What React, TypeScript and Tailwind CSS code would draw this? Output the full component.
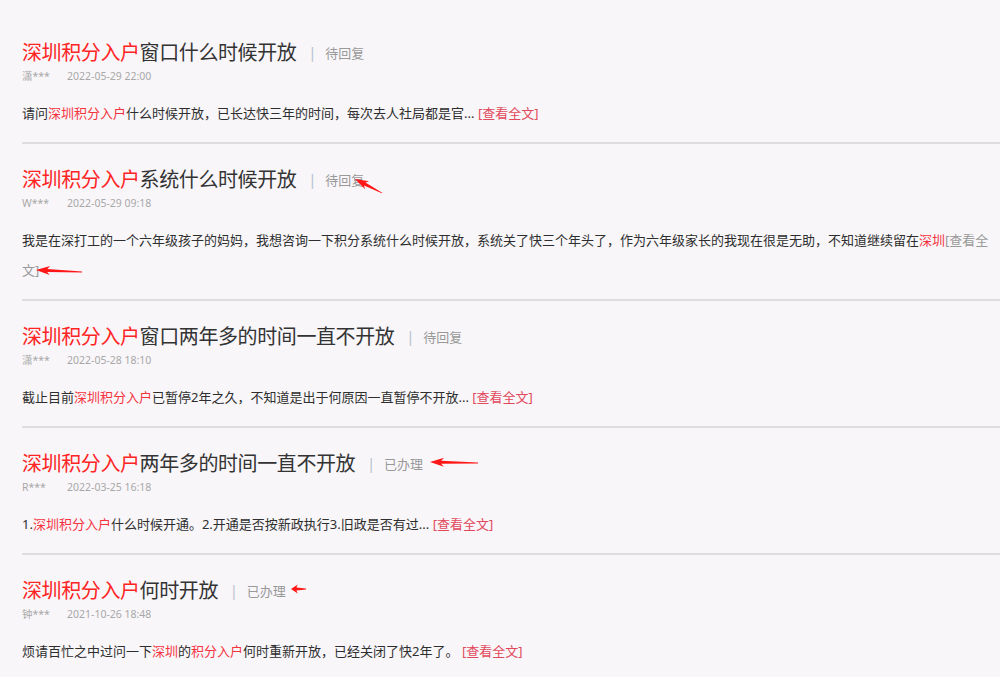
import React from "react";

interface Item {
  rest: string;
  status: string;
  user: string;
  time: string;
  body: React.ReactNode;
}

const Hl = ({ children }: { children: React.ReactNode }) => (
  <span className="text-[#f5333f]">{children}</span>
);

const More = ({ gray }: { gray?: boolean }) => (
  <span className={gray ? "text-[#999]" : "text-[#e2485c]"}>[查看全文]</span>
);

const items: Item[] = [
  {
    rest: "窗口什么时候开放",
    status: "待回复",
    user: "潇***",
    time: "2022-05-29 22:00",
    body: (
      <>
        请问<Hl>深圳积分入户</Hl>什么时候开放，已长达快三年的时间，每次去人社局都是官... <More />
      </>
    ),
  },
  {
    rest: "系统什么时候开放",
    status: "待回复",
    user: "W***",
    time: "2022-05-29 09:18",
    body: (
      <>
        我是在深打工的一个六年级孩子的妈妈，我想咨询一下积分系统什么时候开放，系统关了快三个年头了，作为六年级家长的我现在很是无助，不知道继续留在
        <Hl>深圳</Hl>
        <More gray />
      </>
    ),
  },
  {
    rest: "窗口两年多的时间一直不开放",
    status: "待回复",
    user: "潇***",
    time: "2022-05-28 18:10",
    body: (
      <>
        截止目前<Hl>深圳积分入户</Hl>已暂停2年之久，不知道是出于何原因一直暂停不开放... <More />
      </>
    ),
  },
  {
    rest: "两年多的时间一直不开放",
    status: "已办理",
    user: "R***",
    time: "2022-03-25 16:18",
    body: (
      <>
        1.<Hl>深圳积分入户</Hl>什么时候开通。2.开通是否按新政执行3.旧政是否有过... <More />
      </>
    ),
  },
  {
    rest: "何时开放",
    status: "已办理",
    user: "钟***",
    time: "2021-10-26 18:48",
    body: (
      <>
        烦请百忙之中过问一下<Hl>深圳</Hl>的<Hl>积分入户</Hl>何时重新开放，已经关闭了快2年了。 <More />
      </>
    ),
  },
];

// red annotation arrow, tip at (x1,y1), tail at (x2,y2)
const Arrow = ({ x1, y1, x2, y2 }: { x1: number; y1: number; x2: number; y2: number }) => {
  const len = Math.hypot(x2 - x1, y2 - y1);
  const ang = (Math.atan2(y2 - y1, x2 - x1) * 180) / Math.PI;
  const head = Math.min(14, len * 0.45);
  return (
    <svg
      className="absolute pointer-events-none overflow-visible"
      style={{ left: x1, top: y1, width: 1, height: 1 }}
    >
      <g transform={`rotate(${ang})`}>
        <polygon
          points={`0,0 ${head},-4.5 ${head * 0.8},-1.6 ${len},-0.4 ${len},0.4 ${head * 0.8},1.6 ${head},4.5`}
          fill="#ff1616"
        />
      </g>
    </svg>
  );
};

export default function App() {
  return (
    <div
      className="relative min-h-screen bg-[#f8f6f9] pt-[17px] pl-[22px] text-[#333]"
      style={{ fontFamily: '"Noto Sans", "Noto Sans CJK SC", sans-serif' }}
    >
      {items.map((it, i) => (
        <div
          key={i}
          className={
            "pt-[22px] pb-[14px] " +
            (i < items.length - 1 ? "border-b-2 border-[#dedde1]" : "")
          }
        >
          <div className="flex items-center h-[28px] leading-[28px]">
            <span className="text-[20px] tracking-[-0.4px]">
              <span className="text-[#ff2424]">深圳积分入户</span>
              {it.rest}
            </span>
            <span className="ml-[12px] text-[14px] text-[#b4c0cc]">|</span>
            <span className="ml-[9px] text-[13px] text-[#999]">{it.status}</span>
          </div>
          <div className="flex mt-[1px] h-[16px] leading-[16px] text-[10.5px] text-[#a8a8a8]">
            <span className="w-[45px]">{it.user}</span>
            <span>{it.time}</span>
          </div>
          <div className="mt-[14px] pr-[6px] text-[13px] leading-[30px] text-[#2e2e2e]">
            {it.body}
          </div>
        </div>
      ))}
      <Arrow x1={355} y1={179} x2={382} y2={193} />
      <Arrow x1={36} y1={270} x2={82} y2={272} />
      <Arrow x1={430} y1={462} x2={478} y2={463} />
      <Arrow x1={291} y1={589} x2={306} y2={589} />
    </div>
  );
}
